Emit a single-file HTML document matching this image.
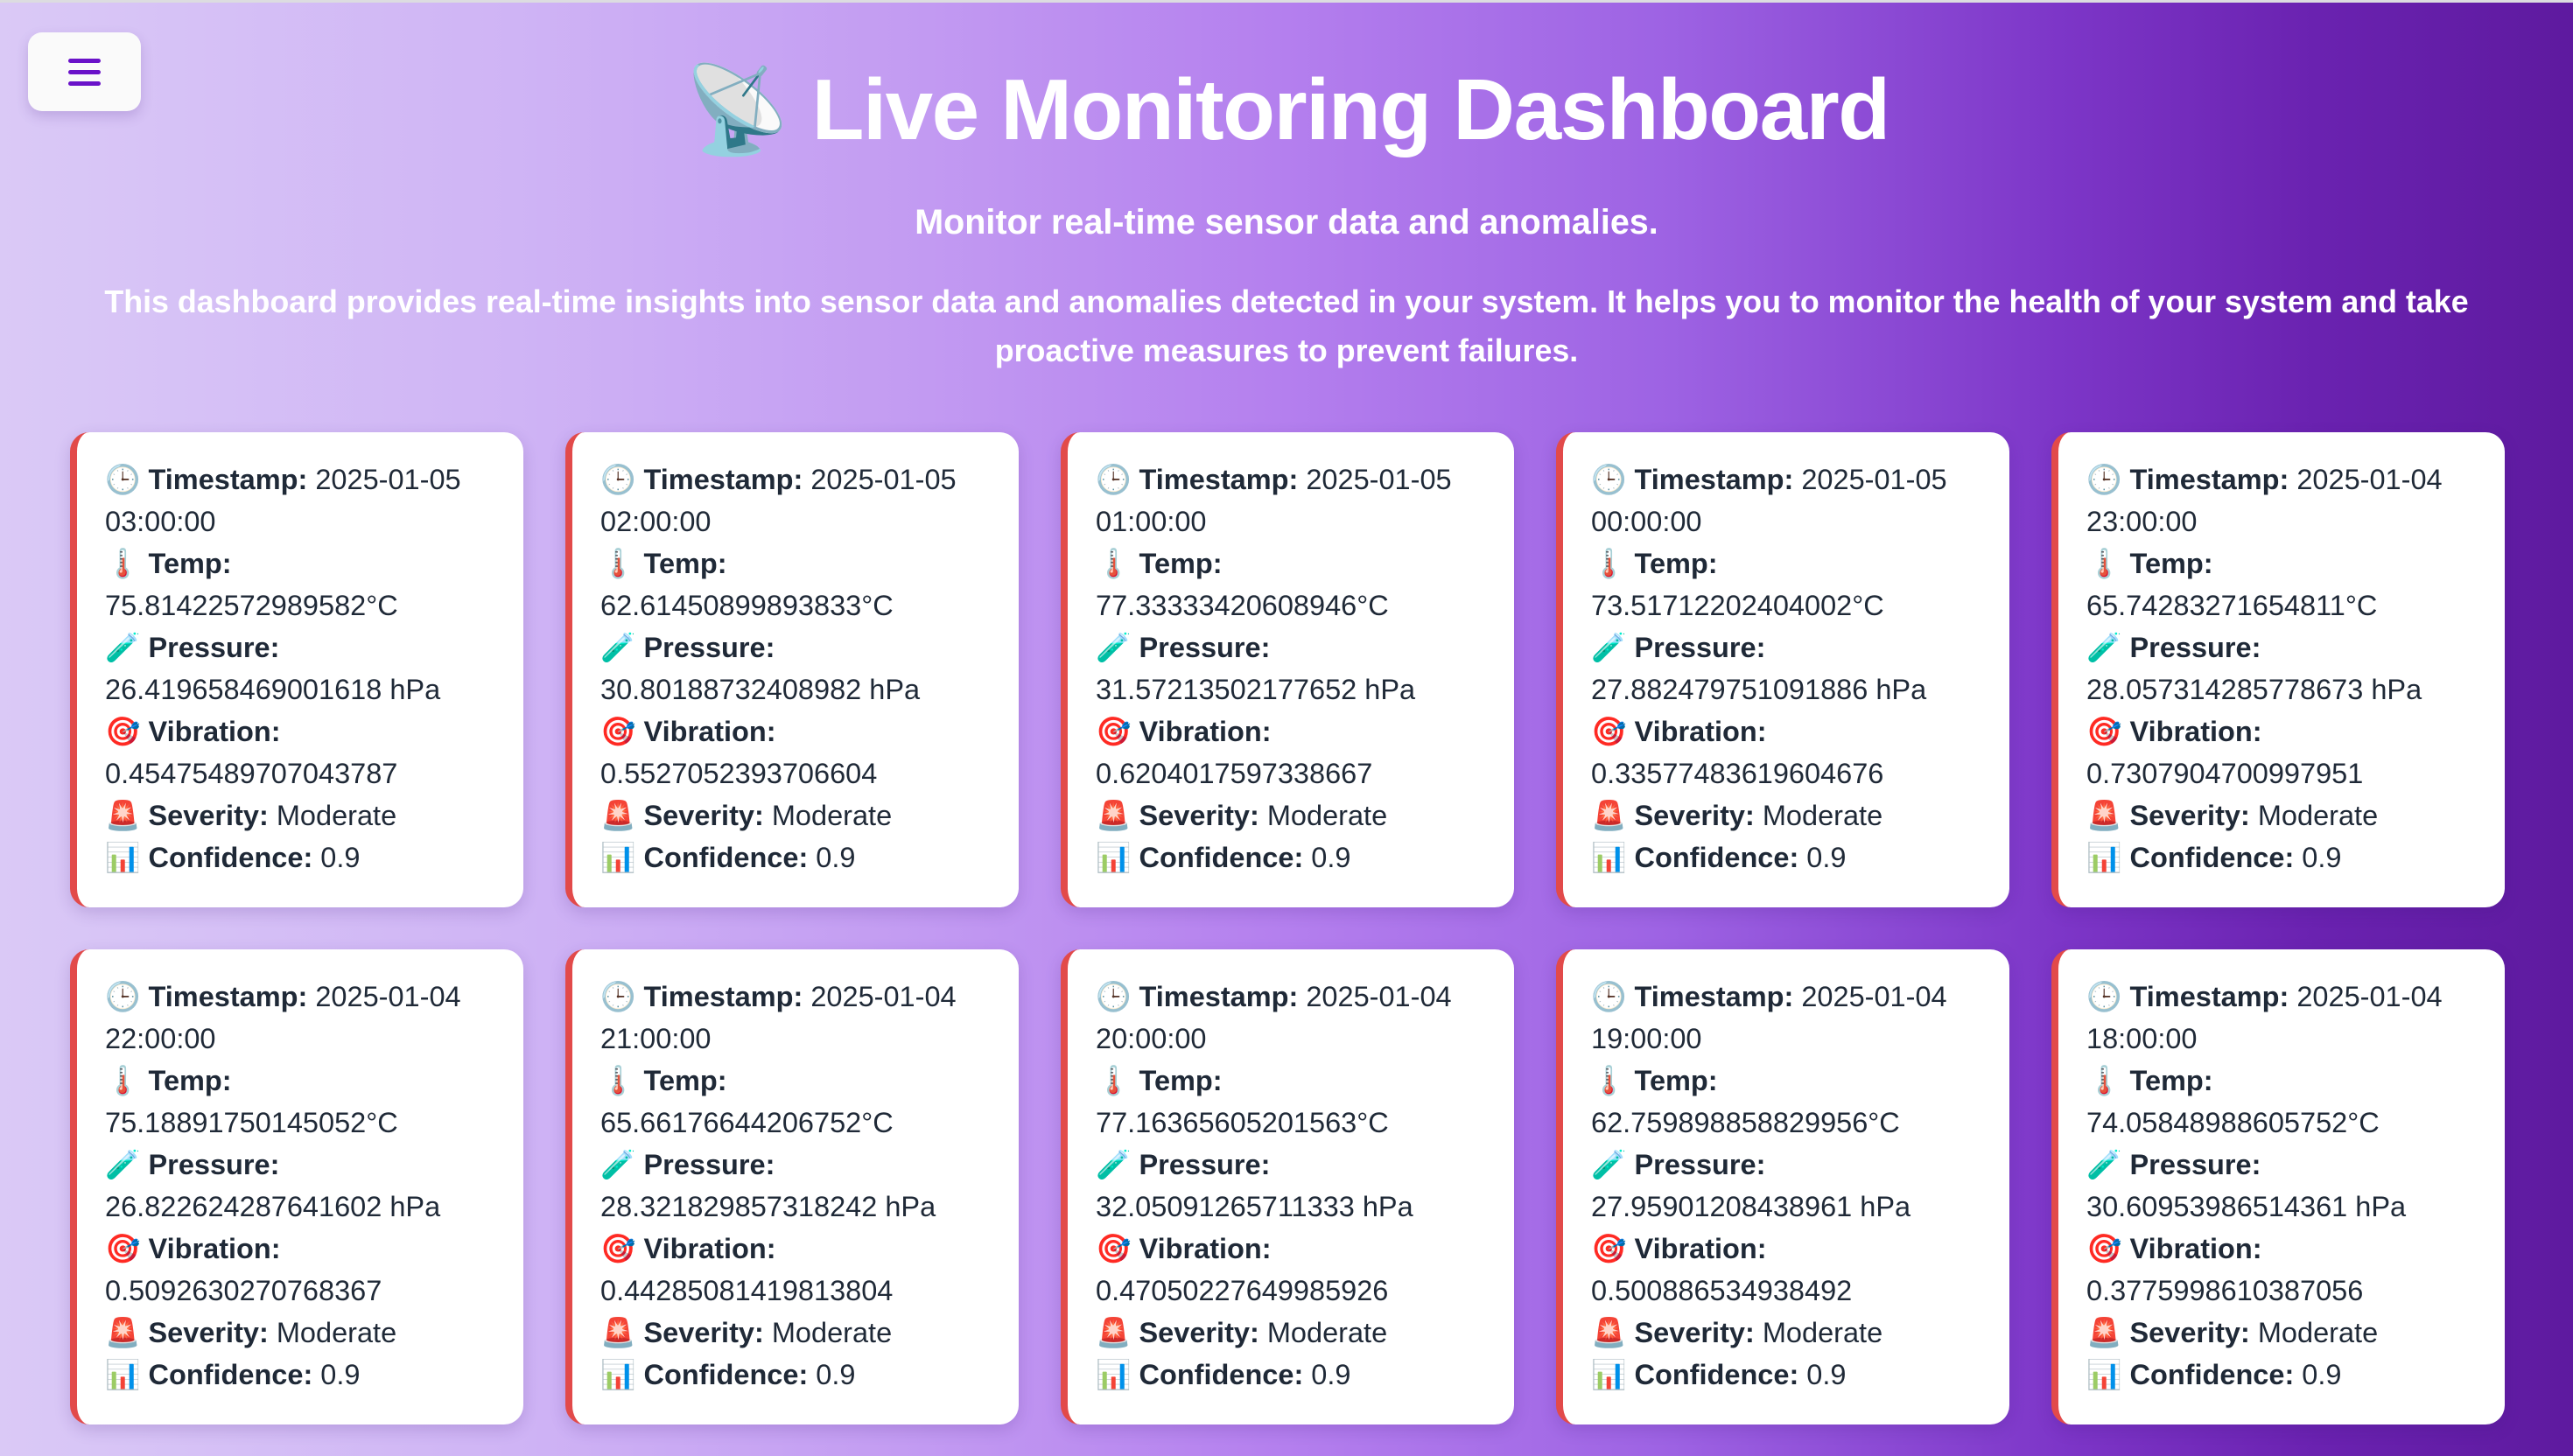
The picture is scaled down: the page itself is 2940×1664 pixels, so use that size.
<!DOCTYPE html>
<html><head><meta charset="utf-8"><style>
*{box-sizing:border-box;margin:0;padding:0}
html,body{width:2940px;height:1664px;overflow:hidden}
body{font-family:"Liberation Sans",sans-serif;background:linear-gradient(90deg,#dac9f6 0%,#cfb4f5 20%,#c39cf2 35%,#b47fee 50%,#9d62e3 65%,#7d36c8 80%,#6a22b0 90%,#5e1a9f 100%);position:relative;border-top:3px solid #dcdce0}
.menu{position:absolute;left:32px;top:34px;width:129px;height:90px;background:#fafafa;border-radius:16px;box-shadow:0 6px 14px rgba(80,40,140,.2)}
.menu i{position:absolute;left:46px;width:37px;height:5px;border-radius:3px;background:#6a12c9}
h1{position:absolute;top:52px;left:0;width:100%;text-align:center;color:#fff;font-size:98px;font-weight:bold;letter-spacing:-1.5px;line-height:140px}
.sub{position:absolute;top:229px;width:100%;text-align:center;color:#fff;font-weight:bold;font-size:39.5px}
.desc{position:absolute;top:314px;width:100%;text-align:center;color:#fff;font-weight:bold;font-size:35.8px;line-height:56px;white-space:nowrap}
.card{position:absolute;width:518px;height:543px;background:#fff;border-radius:22px;border-left:8px solid #e24a4a;padding:30px 0 0 32px;font-size:32.5px;line-height:48px;color:#1f2937;box-shadow:0 6px 18px rgba(60,20,120,.18);white-space:nowrap}
.card b{font-weight:bold}
</style></head><body>
<div class="menu"><i style="top:30px"></i><i style="top:43px"></i><i style="top:56px"></i></div>
<h1>📡 Live Monitoring Dashboard</h1>
<div class="sub">Monitor real-time sensor data and anomalies.</div>
<div class="desc">This dashboard provides real-time insights into sensor data and anomalies detected in your system. It helps you to monitor the health of your system and take<br>proactive measures to prevent failures.</div>

<div class="card" style="left:80px;top:491px">🕒 <b>Timestamp:</b> 2025-01-05<br>03:00:00<br>🌡️ <b>Temp:</b><br>75.81422572989582°C<br>🧪 <b>Pressure:</b><br>26.419658469001618 hPa<br>🎯 <b>Vibration:</b><br>0.45475489707043787<br>🚨 <b>Severity:</b> Moderate<br>📊 <b>Confidence:</b> 0.9</div>
<div class="card" style="left:646px;top:491px">🕒 <b>Timestamp:</b> 2025-01-05<br>02:00:00<br>🌡️ <b>Temp:</b><br>62.61450899893833°C<br>🧪 <b>Pressure:</b><br>30.80188732408982 hPa<br>🎯 <b>Vibration:</b><br>0.5527052393706604<br>🚨 <b>Severity:</b> Moderate<br>📊 <b>Confidence:</b> 0.9</div>
<div class="card" style="left:1212px;top:491px">🕒 <b>Timestamp:</b> 2025-01-05<br>01:00:00<br>🌡️ <b>Temp:</b><br>77.33333420608946°C<br>🧪 <b>Pressure:</b><br>31.57213502177652 hPa<br>🎯 <b>Vibration:</b><br>0.6204017597338667<br>🚨 <b>Severity:</b> Moderate<br>📊 <b>Confidence:</b> 0.9</div>
<div class="card" style="left:1778px;top:491px">🕒 <b>Timestamp:</b> 2025-01-05<br>00:00:00<br>🌡️ <b>Temp:</b><br>73.51712202404002°C<br>🧪 <b>Pressure:</b><br>27.882479751091886 hPa<br>🎯 <b>Vibration:</b><br>0.33577483619604676<br>🚨 <b>Severity:</b> Moderate<br>📊 <b>Confidence:</b> 0.9</div>
<div class="card" style="left:2344px;top:491px">🕒 <b>Timestamp:</b> 2025-01-04<br>23:00:00<br>🌡️ <b>Temp:</b><br>65.74283271654811°C<br>🧪 <b>Pressure:</b><br>28.057314285778673 hPa<br>🎯 <b>Vibration:</b><br>0.7307904700997951<br>🚨 <b>Severity:</b> Moderate<br>📊 <b>Confidence:</b> 0.9</div>

<div class="card" style="left:80px;top:1082px">🕒 <b>Timestamp:</b> 2025-01-04<br>22:00:00<br>🌡️ <b>Temp:</b><br>75.18891750145052°C<br>🧪 <b>Pressure:</b><br>26.822624287641602 hPa<br>🎯 <b>Vibration:</b><br>0.5092630270768367<br>🚨 <b>Severity:</b> Moderate<br>📊 <b>Confidence:</b> 0.9</div>
<div class="card" style="left:646px;top:1082px">🕒 <b>Timestamp:</b> 2025-01-04<br>21:00:00<br>🌡️ <b>Temp:</b><br>65.66176644206752°C<br>🧪 <b>Pressure:</b><br>28.321829857318242 hPa<br>🎯 <b>Vibration:</b><br>0.44285081419813804<br>🚨 <b>Severity:</b> Moderate<br>📊 <b>Confidence:</b> 0.9</div>
<div class="card" style="left:1212px;top:1082px">🕒 <b>Timestamp:</b> 2025-01-04<br>20:00:00<br>🌡️ <b>Temp:</b><br>77.16365605201563°C<br>🧪 <b>Pressure:</b><br>32.05091265711333 hPa<br>🎯 <b>Vibration:</b><br>0.47050227649985926<br>🚨 <b>Severity:</b> Moderate<br>📊 <b>Confidence:</b> 0.9</div>
<div class="card" style="left:1778px;top:1082px">🕒 <b>Timestamp:</b> 2025-01-04<br>19:00:00<br>🌡️ <b>Temp:</b><br>62.759898858829956°C<br>🧪 <b>Pressure:</b><br>27.95901208438961 hPa<br>🎯 <b>Vibration:</b><br>0.500886534938492<br>🚨 <b>Severity:</b> Moderate<br>📊 <b>Confidence:</b> 0.9</div>
<div class="card" style="left:2344px;top:1082px">🕒 <b>Timestamp:</b> 2025-01-04<br>18:00:00<br>🌡️ <b>Temp:</b><br>74.05848988605752°C<br>🧪 <b>Pressure:</b><br>30.60953986514361 hPa<br>🎯 <b>Vibration:</b><br>0.3775998610387056<br>🚨 <b>Severity:</b> Moderate<br>📊 <b>Confidence:</b> 0.9</div>
</body></html>
